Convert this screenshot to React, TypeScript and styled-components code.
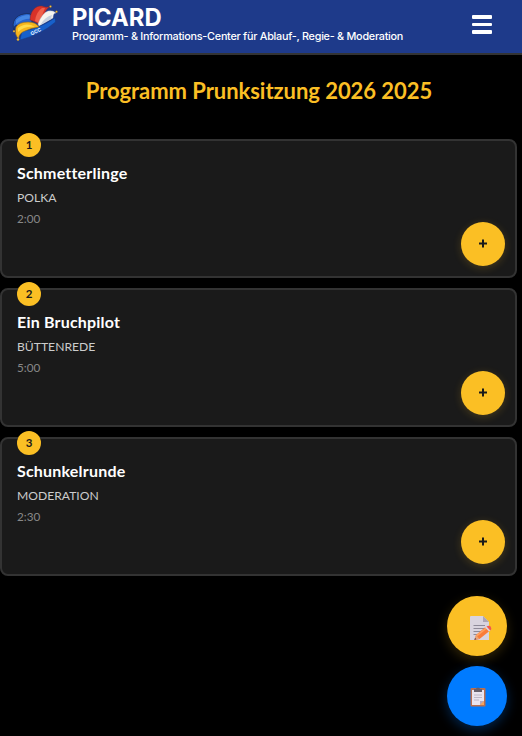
import React from "react";
import styled, { createGlobalStyle } from "styled-components";

const GlobalStyle = createGlobalStyle`
  * { box-sizing: border-box; }
  html, body { margin: 0; background: #000; }
  body { font-family: Lato, "Open Sans", sans-serif; color: #fff; overflow: hidden; }
  button { border: 0; padding: 0; font: inherit; cursor: pointer; }
`;

const Page = styled.div`
  width: 100%;
  height: 736px;
  background: #000;
`;

const Header = styled.header`
  display: flex;
  align-items: flex-start;
  height: 55px;
  padding: 0 30px 0 9px;
  background: #1e3a8a;
  border-bottom: 2px solid #333;
  font-family: Inter, sans-serif;
`;

const Logo = styled.svg`
  flex: none;
  width: 54px;
  height: 46px;
  margin-right: 9px;
`;

const Brand = styled.div`
  flex: 1;
  padding-top: 6px;
  white-space: nowrap;
`;

const BrandName = styled.div`
  font-size: 23.8px;
  line-height: 23px;
  font-weight: 700;
`;

const BrandLine = styled.div`
  font-size: 10.8px;
  line-height: 15px;
  font-weight: 500;
  letter-spacing: -0.25px;
`;

const MenuButton = styled.button`
  display: flex;
  flex-direction: column;
  gap: 4px;
  width: 20px;
  margin-top: 15px;
  background: none;
`;

const MenuBar = styled.span`
  height: 3.5px;
  border-radius: 1px;
  background: #fff;
`;

const Title = styled.h1`
  margin: 0;
  padding-top: 21px;
  height: 84px;
  text-align: center;
  white-space: nowrap;
  color: #fbbf24;
  font-size: 22px;
  line-height: 30px;
  font-weight: 700;
  letter-spacing: -0.05px;
  padding-right: 4px;
`;

const List = styled.main`
  display: flex;
  flex-direction: column;
  gap: 10px;
  padding-right: 5px;
`;

const Card = styled.article`
  position: relative;
  height: 139px;
  padding: 21px 15px 0;
  background: #1a1a1a;
  border: 2px solid #333;
  border-radius: 8px;
`;

const Badge = styled.span`
  position: absolute;
  top: -8px;
  left: 15px;
  display: grid;
  place-items: center;
  width: 24px;
  height: 24px;
  border-radius: 50%;
  background: #fbbf24;
  color: #1a1a1a;
  font-size: 11.5px;
  line-height: 24px;
  font-weight: 700;
`;

const Name = styled.h2`
  margin: 0;
  font-size: 16px;
  line-height: 21px;
  font-weight: 700;
  letter-spacing: 0.2px;
`;

const Kind = styled.div`
  margin-top: 6px;
  color: #ccc;
  font-size: 12.15px;
  line-height: 18px;
`;

const Duration = styled.div`
  margin-top: 3px;
  color: #888;
  font-size: 11.7px;
  line-height: 16px;
`;

const AddButton = styled.button`
  position: absolute;
  right: 10px;
  bottom: 10px;
  display: grid;
  place-items: center;
  width: 44px;
  height: 44px;
  border-radius: 50%;
  background: #fbbf24;
  box-shadow: 0 2px 8px rgba(251, 191, 36, 0.2);
`;

const Actions = styled.nav`
  position: fixed;
  right: 15px;
  bottom: 10px;
  display: flex;
  flex-direction: column;
  gap: 10px;
`;

const RoundButton = styled.button<{ $color: string; $glow: string }>`
  display: grid;
  place-items: center;
  width: 60px;
  height: 60px;
  border-radius: 50%;
  background: ${(p) => p.$color};
  box-shadow: 0 4px 12px ${(p) => p.$glow};
`;

const NoteSvg = styled.svg`
  width: 24px;
  height: 26px;
  margin: 3px 0 0 6px;
`;

const BoardSvg = styled.svg`
  width: 16px;
  height: 20px;
  margin: 2px 0 0 1px;
`;

function JesterHat() {
  return (
    <Logo viewBox="9 0 54 46">
      <path d="M14.5 31C10.5 22 16 15 24 14Q30 12 33 17L31 25L21 28L17 25Q13 26 14.5 31Z" fill="#2864ce" stroke="#15264f" strokeWidth=".7" />
      <path d="M16 20Q21 15 29 15L32 19Q24 18 16 24Z" fill="#4587e4" />
      <path d="M30 20C30 11 36 5 42 6Q46 8 50 6.5Q46 9 45 13L39 24L33 21Z" fill="#d83228" stroke="#772b35" strokeWidth=".5" />
      <path d="M35 21Q36 12 42 8L45 8L39 23Z" fill="#ef604b" />
      <path d="M38 24Q42 13 48 11Q53 10 56 13Q53 13 53 18L39 26Z" fill="#f6f4ef" stroke="#b1bbce" strokeWidth=".4" />
      <path d="M41 24Q45 17 52 15L51 19L40 25Z" fill="#c7d1df" />
      <path d="M20 40L22 31Q37 30 55 18L55.5 22Q42 34 20 40Z" fill="#1760cb" stroke="#153c86" strokeWidth=".5" />
      <path d="M18.5 39Q14 34 16 27Q19 22 28 22Q36 22 39 27Q31 28 25 31Q19 33 18.5 39Z" fill="#f6b51d" stroke="#7c6132" strokeWidth=".6" />
      <path d="M18 28Q24 23 31 25L35 27Q24 26 18 32Z" fill="#ffda4b" />
      <g fill="#f7c43d" stroke="#9b6d20" strokeWidth=".3">
        <circle cx="14" cy="31.3" r="1" />
        <circle cx="50.5" cy="6.5" r="1" />
        <circle cx="56.5" cy="11.7" r="1" />
        <circle cx="18" cy="39.5" r="1.2" />
      </g>
      <text x="31.5" y="35.5" transform="rotate(-26 31.5 35.5)" fill="#fff" fontFamily="Liberation Sans, sans-serif" fontWeight="700" fontSize="5">GCC</text>
    </Logo>
  );
}

function NoteIcon() {
  return (
    <NoteSvg viewBox="0 0 24 26">
      <path d="M3 1H15L21 7V25H2V2Q2 1 3 1Z" fill="#d9d4df" />
      <path d="M15 1V7H21Z" fill="#aca5b6" />
      <path d="M5.5 10.5H17M5.5 13.5H17M5.5 16.5H14M5.5 19.5H10" stroke="#8e8a99" strokeWidth="1" />
      <path d="M6.5 25L8 20L17.5 12L21.5 16L11.5 24Z" fill="#fa7c38" />
      <path d="M8 20L18 12.5L19 13.5L8.5 22Z" fill="#ffa05d" />
      <path d="M6.5 25L8 20L11.5 24Z" fill="#eba477" />
      <path d="M6.3 25L7 22.8L8.4 24.2Z" fill="#594152" />
      <path d="M17 12.5L18.5 11.2L22.5 15.2L21 16.5Z" fill="#d9d6df" />
      <path d="M18.5 11.5Q21 10 22.7 11.5Q24 13.5 22.3 15.5Z" fill="#f35650" />
    </NoteSvg>
  );
}

function BoardIcon() {
  return (
    <BoardSvg viewBox="0 0 16 20">
      <rect x=".5" y="1" width="15" height="18.5" rx="1" fill="#b96f50" />
      <path d="M2 3H14V14L10 18H2Z" fill="#e9e4f0" />
      <path d="M10 18V14H14Z" fill="#b8a9bb" />
      <path d="M10 18L14 14V18Z" fill="#f5a45f" />
      <path d="M4 5V2H6Q6 .5 8 .5T10 2H12V5Z" fill="#66606d" />
      <path d="M4 8H12M4 10.5H12M4 13H9" stroke="#b8b2c3" strokeWidth=".9" />
    </BoardSvg>
  );
}

const items = [
  { name: "Schmetterlinge", kind: "POLKA", time: "2:00" },
  { name: "Ein Bruchpilot", kind: "BÜTTENREDE", time: "5:00" },
  { name: "Schunkelrunde", kind: "MODERATION", time: "2:30" },
];

export default function App() {
  return (
    <Page>
      <GlobalStyle />
      <Header>
        <JesterHat />
        <Brand>
          <BrandName>PICARD</BrandName>
          <BrandLine>Programm- &amp; Informations-Center für Ablauf-, Regie- &amp; Moderation</BrandLine>
        </Brand>
        <MenuButton aria-label="Menü">
          <MenuBar />
          <MenuBar />
          <MenuBar />
        </MenuButton>
      </Header>
      <Title>Programm Prunksitzung 2026 2025</Title>
      <List>
        {items.map((item, i) => (
          <Card key={item.name}>
            <Badge>{i + 1}</Badge>
            <Name>{item.name}</Name>
            <Kind>{item.kind}</Kind>
            <Duration>{item.time}</Duration>
            <AddButton aria-label="Hinzufügen">
              <svg width="10" height="10" viewBox="0 0 10 10">
                <path d="M5 0V8M1 4H9" transform="translate(0 .5)" stroke="#1a1a1a" strokeWidth="2" />
              </svg>
            </AddButton>
          </Card>
        ))}
      </List>
      <Actions>
        <RoundButton $color="#fbbf24" $glow="rgba(251, 191, 36, 0.2)" aria-label="Notizen">
          <NoteIcon />
        </RoundButton>
        <RoundButton $color="#007bff" $glow="rgba(0, 123, 255, 0.3)" aria-label="Liste">
          <BoardIcon />
        </RoundButton>
      </Actions>
    </Page>
  );
}
